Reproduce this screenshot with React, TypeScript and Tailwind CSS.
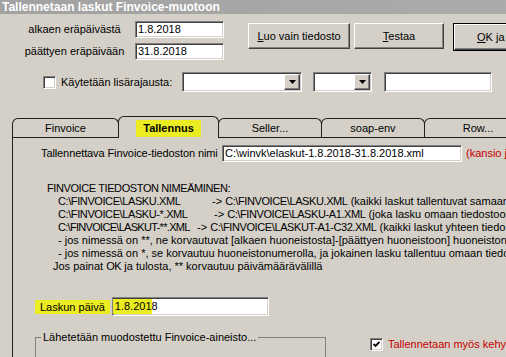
import React from "react";

const sunken =
  "bg-white border border-t-[#808080] border-l-[#808080] border-b-white border-r-white shadow-[inset_1px_1px_0_#404040,inset_-1px_-1px_0_#d4d0c8]";
const raised =
  "bg-[#d4d0c8] border border-t-white border-l-white border-b-[#404040] border-r-[#404040] shadow-[inset_-1px_-1px_0_#808080]";

const TextBox = ({ className, children }: { className: string; children?: React.ReactNode }) => (
  <div className={`${sunken} ${className} shrink-0 flex items-center pl-[2px] whitespace-nowrap overflow-hidden`}>
    {children}
  </div>
);

const Combo = ({ className }: { className: string }) => (
  <div className={`${sunken} ${className} shrink-0 flex justify-end p-[1px]`}>
    <div className={`${raised} w-[16px] h-full flex items-center justify-center`}>
      <svg width="7" height="4" viewBox="0 0 7 4">
        <path d="M0 0h7L3.5 4z" fill="#000" />
      </svg>
    </div>
  </div>
);

const CheckBox = ({ checked }: { checked?: boolean }) => (
  <div className={`${sunken} w-[13px] h-[13px] shrink-0 flex items-center justify-center`}>
    {checked && (
      <svg width="7" height="7" viewBox="0 0 7 7">
        <polyline points="0.5,3 2.5,5 6.5,1" fill="none" stroke="#000" strokeWidth="1.8" />
      </svg>
    )}
  </div>
);

const Button = ({ className, children }: { className: string; children: React.ReactNode }) => (
  <div className={`${raised} ${className} h-[26px] shrink-0 flex items-center justify-center whitespace-nowrap`}>
    {children}
  </div>
);

const Tab = ({ label, w, selected, first }: { label: React.ReactNode; w: string; selected?: boolean; first?: boolean }) =>
  selected ? (
    <div
      className={`${w} ${first ? "" : "-ml-px"} h-[22px] -mb-px relative z-10 bg-[#d4d0c8] border border-b-0 border-[#1e1e1e] rounded-t-[6px] flex items-center justify-center shrink-0`}
    >
      {label}
    </div>
  ) : (
    <div
      className={`${w} ${first ? "" : "-ml-px"} h-[19px] border border-b-0 border-[#1e1e1e] rounded-t-[6px] flex items-center justify-center shrink-0`}
    >
      {label}
    </div>
  );

// uppercase runs are wider in Liberation Sans than in the dialog's bitmap font
const Up = ({ children, className = "tracking-[-0.4px]" }: { children: React.ReactNode; className?: string }) => (
  <span className={className}>{children}</span>
);

export default function App() {
  return (
    <div className="w-[506px] h-[357px] overflow-hidden bg-[#d4d0c8] text-black text-[11px] leading-[13px] font-['Liberation_Sans',Arial,sans-serif]">
      {/* title bar */}
      <div className="h-[14px] bg-gradient-to-r from-[#a2a2a2] to-[#ababab] text-white font-bold text-[12px] leading-[14px] pl-[2px] whitespace-nowrap">
        Tallennetaan laskut Finvoice-muotoon
      </div>

      {/* dates + buttons */}
      <div className="flex mt-[7px]">
        <div className="grid grid-cols-[121px_89px] gap-y-[5px] pl-[14px] items-center">
          <div className="text-center whitespace-nowrap">alkaen eräpäivästä</div>
          <TextBox className="h-[17px]">1.8.2018</TextBox>
          <div className="text-center whitespace-nowrap">päättyen eräpäivään</div>
          <TextBox className="h-[17px]">31.8.2018</TextBox>
        </div>
        <div className="flex ml-[24px] mt-[2px] self-start">
          <Button className="w-[102px]">
            <span><u>L</u>uo vain tiedosto</span>
          </Button>
          <Button className="w-[90px] ml-[4px]">
            <span><u>T</u>estaa</span>
          </Button>
          <div className="ml-[9px] border border-black shrink-0">
            <Button className="w-[109px] h-[24px]">
              <span><u>O</u>K ja tulosta</span>
            </Button>
          </div>
        </div>
      </div>

      {/* extra filter */}
      <div className="flex items-center mt-[12px] h-[20px] pl-[43px] whitespace-nowrap">
        <CheckBox />
        <span className="ml-[5px] w-[121px] shrink-0">Käytetään lisärajausta:</span>
        <Combo className="w-[120px] h-[20px]" />
        <Combo className="w-[59px] h-[20px] ml-[11px]" />
        <TextBox className="w-[108px] h-[20px] ml-[12px]" />
      </div>

      {/* tabs */}
      <div className="flex items-end mt-[24px] pl-[12px] whitespace-nowrap">
        <Tab first w="w-[107px]" label="Finvoice" />
        <Tab
          selected
          w="w-[101px]"
          label={<span className="bg-[#ecec22] font-bold px-[7px] py-[2px] mt-[1px]">Tallennus</span>}
        />
        <Tab w="w-[104px]" label="Seller..." />
        <Tab w="w-[104px]" label="soap-env" />
        <Tab w="w-[108px]" label="Row..." />
      </div>

      {/* panel */}
      <div className="ml-[12px] border-t border-l border-[#1e1e1e] h-[240px] whitespace-nowrap">
        <div className="flex items-center pt-[7px] pl-[28px]">
          <span className="w-[181px] shrink-0 tracking-[-0.1px]">Tallennettava Finvoice-tiedoston nimi</span>
          <TextBox className="w-[240px] h-[17px]">C:\winvk\elaskut-1.8.2018-31.8.2018.xml</TextBox>
          <span className="ml-[4px] text-[#c40000]">(kansio ja tiedoston nimi)</span>
        </div>

        <div className="mt-[20px] leading-[13px]">
          <div className="pl-[34px]">
            <Up>FINVOICE TIEDOSTON NIMEÄMINEN:</Up>
          </div>
          <div className="pl-[45px]">
            <Up className="inline-block w-[154px] tracking-[-0.4px]">C:\FINVOICE\LASKU.XML</Up>
            -&gt; <Up>C:\FINVOICE\LASKU.XML</Up> (kaikki laskut tallentuvat samaan tiedostoon)
          </div>
          <div className="pl-[45px]">
            <Up className="inline-block w-[156px] tracking-[-0.4px]">C:\FINVOICE\LASKU-*.XML</Up>
            -&gt; <Up>C:\FINVOICE\LASKU-A1.XML</Up> (joka lasku omaan tiedostoon)
          </div>
          <div className="pl-[45px]">
            <Up className="inline-block w-[139px] tracking-[-0.7px]">C:\FINVOICE\LASKUT-**.XML</Up>
            -&gt; <Up>C:\FINVOICE\LASKUT-A1-C32.XML</Up> (kaikki laskut yhteen tiedostoon)
          </div>
          <div className="pl-[45px]">
            - jos nimessä on **, ne korvautuvat [alkaen huoneistosta]-[päättyen huoneistoon] huoneistonumeroilla
          </div>
          <div className="pl-[45px]">
            - jos nimessä on *, se korvautuu huoneistonumerolla, ja jokainen lasku tallentuu omaan tiedostoonsa
          </div>
          <div className="pl-[40px]">
            Jos painat <Up>OK</Up> ja tulosta, ** korvautuu päivämäärävälillä
          </div>
        </div>

        <div className="flex items-center mt-[24px] pl-[22px]">
          <span className="bg-[#ecec22] px-[5px] h-[14px] leading-[14px]">Laskun päivä</span>
          <div className={`${sunken} ml-[2px] w-[157px] h-[19px] shrink-0 flex items-center`}>
            <span className="bg-[#ecec22] pl-[2px] py-[1px]">1.8.201</span>
            <span>8</span>
          </div>
        </div>

        <div className="flex items-start mt-[15px] pl-[22px]">
          <fieldset className="w-[291px] h-[40px] border border-[#808080] shrink-0">
            <legend className="ml-[5px] px-[2px]">Lähetetään muodostettu Finvoice-aineisto...</legend>
          </fieldset>
          <div className="flex items-center ml-[44px] mt-[7px]">
            <CheckBox checked />
            <span className="ml-[5px] text-[#c40000]">Tallennetaan myös kehystiedot</span>
          </div>
        </div>
      </div>
    </div>
  );
}
